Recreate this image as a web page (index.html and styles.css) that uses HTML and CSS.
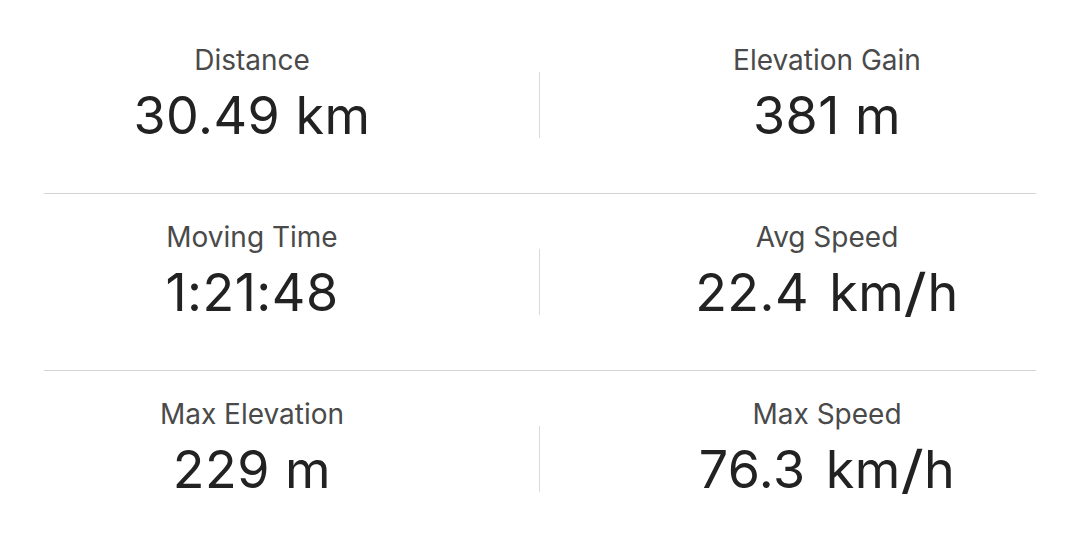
FILE: index.html
```html
<!DOCTYPE html>
<html lang="en">
<head>
<meta charset="utf-8">
<title>Activity stats</title>
<link rel="stylesheet" href="styles.css">
</head>
<body>
<main class="stats">
  <section class="row">
    <div class="stat"><div class="label">Distance</div><div class="value">30.49 km</div></div>
    <div class="divider"></div>
    <div class="stat"><div class="label">Elevation Gain</div><div class="value">381 m</div></div>
  </section>
  <div class="rule"></div>
  <section class="row">
    <div class="stat"><div class="label">Moving Time</div><div class="value">1:21:48</div></div>
    <div class="divider"></div>
    <div class="stat"><div class="label">Avg Speed</div><div class="value speed">22.4 km<span class="slash">/</span>h</div></div>
  </section>
  <div class="rule"></div>
  <section class="row">
    <div class="stat"><div class="label">Max Elevation</div><div class="value">229 m</div></div>
    <div class="divider"></div>
    <div class="stat"><div class="label">Max Speed</div><div class="value speed">76.3 km<span class="slash">/</span>h</div></div>
  </section>
</main>
</body>
</html>
```
FILE: styles.css
```css
html, body {
  margin: 0;
  padding: 0;
  background: #ffffff;
  overflow: hidden;
}
body {
  width: 1080px;
  height: 554px;
  font-family: Inter, "Noto Sans", "Liberation Sans", sans-serif;
}
.stats {
  padding-top: 17px;
}
.row {
  display: grid;
  grid-template-columns: 1fr 1px 1fr;
  margin: 0 -34px 0 -35px;
  padding: 29px 0 51px;
}
.stat {
  display: flex;
  flex-direction: column;
  align-items: center;
  gap: 16px;
}
.label {
  font-size: 28px;
  line-height: 28px;
  color: #4a4a4a;
  font-weight: 400;
}
.value {
  font-size: 52px;
  line-height: 52px;
  color: #222222;
  font-weight: 400;
  letter-spacing: 0.5px;
}
.speed {
  word-spacing: 5px;
}
.slash {
  display: inline-block;
  margin: 0 2px;
  transform: scaleX(1.25);
}
.divider {
  align-self: start;
  margin-top: 26px;
  height: 66px;
  background: #dadada;
}
.rule {
  height: 1px;
  margin: 0 44px;
  background: #d4d4d4;
}
```
